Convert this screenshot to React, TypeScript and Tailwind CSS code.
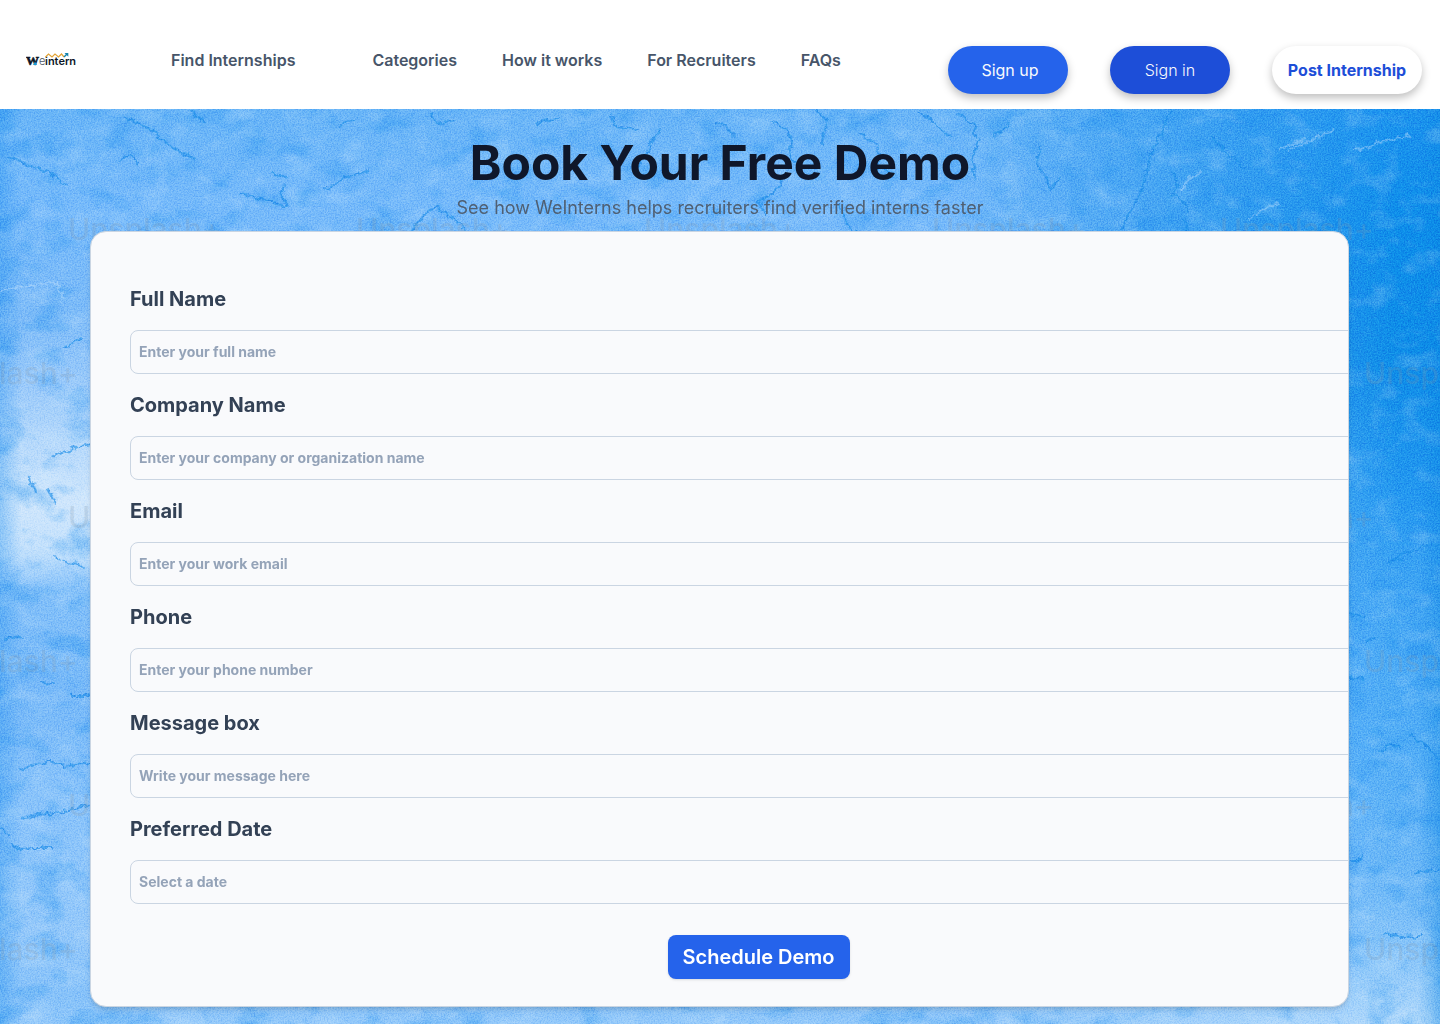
import React from "react";

const navLinks = ["Categories", "How it works", "For Recruiters", "FAQs"];

const fields = [
  { id: "full-name", label: "Full Name", placeholder: "Enter your full name", type: "text" },
  { id: "company", label: "Company Name", placeholder: "Enter your company or organization name", type: "text" },
  { id: "email", label: "Email", placeholder: "Enter your work email", type: "email" },
  { id: "phone", label: "Phone", placeholder: "Enter your phone number", type: "tel" },
  { id: "message", label: "Message box", placeholder: "Write your message here", type: "multiline" },
  { id: "date", label: "Preferred Date", placeholder: "Select a date", type: "text" },
];

const watermarks = [
  [68, 131], [356, 131], [644, 131], [932, 131], [1220, 131],
  [-76, 275], [1364, 275],
  [68, 419], [1220, 419],
  [-76, 563], [1364, 563],
  [68, 707], [1220, 707],
  [-76, 851], [1364, 851],
];

const darkCracks = [
  "M8 48l12 4 30 12 16 12",
  "M124 8l26 12 24 20 20 10",
  "M190 2l14 12",
  "M120 52l10-6 8 8",
  "M240 85l20 4 28 8-8-14 6-8",
  "M270 62l16 8",
  "M340 17l6-5 10-2M368 62l-22 6-20 12",
  "M430 6l10 8 12-2",
  "M412 122l10-14 14-10 16 10 14 14",
  "M536 14l22-5M612 8l4 10 22 2M660 20l-14 24-8 14",
  "M715 14l10 2 8 10",
  "M772 12l14 8 6 12-2 16 8 10",
  "M818 2l10 10-4 12-2 10",
  "M860 24l12 8 8 12-2 14 14 8",
  "M920 2l14 12 16 14",
  "M786 66l-12 18-16 8 8 14M838 95l6 12 8 18 6-4",
  "M958 4l18 14-2 10M978 30l-6 22 4 20",
  "M1008 14l-6 10-8 2",
  "M1040 38l-3 18 8 12 6 14 8-14",
  "M1170 2l-8 20-10 20-8 30-8 22-8 12-6 14",
  "M1174 64l4 14-6 8 12 6 6 10M1184 110l4 14",
  "M1212 28l12 14 20 16",
  "M1334 70l-3 24 4 18 6 10",
  "M1364 278l20-4 30-6 26-4M1388 451l18-7 22-8 12-1M1388 452l14-2",
  "M1350 505l16 3M1366 533l12-5M1350 568l14 1",
  "M1380 642l12-6 8 2M1412 626l12 10 16 14",
  "M1350 752l8 0 5-6M1416 763l24-1M1384 824l16 4 20-1",
  "M54 346l24-8 12-3M30 370l6 12M48 380l8 14",
  "M54 446l14 8 16 3",
  "M4 530l18-2M70 587l14 0 6-2M42 574l12 1",
  "M20 660l30-8 14 6 26-4M24 708l30-4 36-8",
  "M0 720l10 6M12 736l8 4 14-1 18 0",
  "M142 202l-4 12M62 239l20-10",
];

const lightCracks = [
  "M1181 82l8-12 14-8",
  "M1250 109l12-8 16-6",
  "M1354 42l30-10 26-6",
  "M1290 40l20-8 24-12",
  "M0 182l30-5 28-4M54 172l10 18",
  "M1280 40l26-10",
];

function PaintBackdrop() {
  return (
    <svg
      aria-hidden="true"
      className="absolute inset-0 h-full w-full"
      viewBox="0 0 1440 915"
      preserveAspectRatio="xMidYMid slice"
    >
      <defs>
        <linearGradient id="leftTone" x1="0" y1="0" x2="0" y2="1">
          <stop offset="0" stopColor="#68b5f7" />
          <stop offset="0.1" stopColor="#75bafa" />
          <stop offset="0.22" stopColor="#7bbbf8" />
          <stop offset="0.3" stopColor="#9acafa" />
          <stop offset="0.36" stopColor="#b4d8fb" />
          <stop offset="0.43" stopColor="#cfe6fc" />
          <stop offset="0.48" stopColor="#c4e1fc" />
          <stop offset="0.53" stopColor="#82c0f9" />
          <stop offset="0.64" stopColor="#76b9f8" />
          <stop offset="0.75" stopColor="#88c3fa" />
          <stop offset="0.9" stopColor="#95c9fa" />
          <stop offset="0.97" stopColor="#86c2f9" />
          <stop offset="1" stopColor="#93c9fa" />
        </linearGradient>
        <linearGradient id="rightTone" x1="0" y1="0" x2="0" y2="1">
          <stop offset="0" stopColor="#1b94ee" />
          <stop offset="0.12" stopColor="#0d8eea" />
          <stop offset="0.28" stopColor="#0d8de8" />
          <stop offset="0.42" stopColor="#2399f0" />
          <stop offset="0.55" stopColor="#45a8f4" />
          <stop offset="0.7" stopColor="#52aef6" />
          <stop offset="0.84" stopColor="#6cb8f7" />
          <stop offset="0.93" stopColor="#8cc7f9" />
          <stop offset="1" stopColor="#b0d8fb" />
        </linearGradient>
        <linearGradient id="rightFade">
          <stop offset="0.66" stopColor="#fff" stopOpacity="0" />
          <stop offset="0.8" stopColor="#fff" stopOpacity="0.45" />
          <stop offset="0.97" stopColor="#fff" stopOpacity="1" />
        </linearGradient>
        <linearGradient id="edges">
          <stop offset="0" stopColor="#1c8fee" stopOpacity="0.35" />
          <stop offset="0.015" stopColor="#1c8fee" stopOpacity="0" />
          <stop offset="0.985" stopColor="#0a86e2" stopOpacity="0" />
          <stop offset="1" stopColor="#0a86e2" stopOpacity="0.4" />
        </linearGradient>
        <mask id="rightMask">
          <rect width="1440" height="915" fill="url(#rightFade)" />
        </mask>
        <filter id="grain" x="0" y="0" width="100%" height="100%" colorInterpolationFilters="sRGB">
          <feTurbulence type="fractalNoise" baseFrequency="0.7" numOctaves="2" seed="4" />
          <feColorMatrix values="2 0 0 0 -0.5  2 0 0 0 -0.5  2 0 0 0 -0.5  0 0 0 0 1" />
        </filter>
        <filter id="blotchDark" x="0" y="0" width="100%" height="100%" colorInterpolationFilters="sRGB">
          <feTurbulence type="fractalNoise" baseFrequency="0.03 0.04" numOctaves="6" seed="11" />
          <feColorMatrix values="0 0 0 0 0.1  0 0 0 0 0.56  0 0 0 0 0.93  3 0 0 0 -1.5" />
        </filter>
        <filter id="blotchLight" x="0" y="0" width="100%" height="100%" colorInterpolationFilters="sRGB">
          <feTurbulence type="fractalNoise" baseFrequency="0.035 0.05" numOctaves="6" seed="23" />
          <feColorMatrix values="0 0 0 0 0.88  0 0 0 0 0.95  0 0 0 0 1  2.5 0 0 0 -1.25" />
        </filter>
        <filter id="rough" x="-5%" y="-5%" width="110%" height="110%">
          <feTurbulence type="fractalNoise" baseFrequency="0.15" numOctaves="3" seed="7" />
          <feDisplacementMap in="SourceGraphic" scale="8" xChannelSelector="R" yChannelSelector="G" />
          <feGaussianBlur stdDeviation="0.7" />
        </filter>
      </defs>
      <rect width="1440" height="915" fill="url(#leftTone)" />
      <rect width="1440" height="915" fill="url(#rightTone)" mask="url(#rightMask)" />
      <rect width="1440" height="915" fill="url(#edges)" />
      <rect width="1440" height="915" filter="url(#blotchDark)" opacity="0.35" />
      <rect width="1440" height="915" filter="url(#blotchLight)" opacity="0.22" />
      <g filter="url(#rough)" fill="none" strokeLinecap="round" strokeLinejoin="round">
        <g stroke="#148be8" strokeWidth="2" opacity="0.6">
          {darkCracks.map((d) => (
            <path key={d} d={d} />
          ))}
        </g>
        <g stroke="#c4e2fc" strokeWidth="2" opacity="0.4">
          {lightCracks.map((d) => (
            <path key={d} d={d} />
          ))}
        </g>
      </g>
      <rect width="1440" height="915" filter="url(#grain)" opacity="0.35" className="mix-blend-soft-light" />
      <g fill="#8499ad" opacity="0.22" fontFamily="Inter, sans-serif" fontSize="30" fontWeight="500">
        {watermarks.map(([x, y]) => (
          <text key={`${x}-${y}`} x={x} y={y}>
            Unsplash+
          </text>
        ))}
      </g>
    </svg>
  );
}

function Logo() {
  return (
    <svg aria-label="Weintern" role="img" className="h-4 w-[50px]" viewBox="0 0 50 16">
      <text x="0" y="13" fill="#0b1526" fontFamily="Liberation Serif, serif" fontSize="13" fontWeight="700" stroke="#0b1526" strokeWidth="0.6">
        W
      </text>
      <path d="M7 13l2-3.500 2 3.500z" fill="#1d9ad0" />
      <text x="13" y="13" fill="#4b5563" fontFamily="Inter, sans-serif" fontSize="11" fontWeight="300">
        e
      </text>
      <text x="19" y="13" fill="#0b1526" fontFamily="Inter, sans-serif" fontSize="11" fontWeight="600">
        intern
      </text>
      <path d="M19.500 5l3-3 3.500 3 3-3 3.500 3 3-3 2.500 3" fill="none" stroke="#e2a336" strokeWidth="1.200" />
      <path d="M38 5l3-3" stroke="#1583ad" strokeWidth="1.400" />
      <path d="M38.500 1h3.800v3.800z" fill="#1583ad" />
    </svg>
  );
}

export default function App() {
  return (
    <div className="flex min-h-screen flex-col bg-white font-['Inter',sans-serif]">
      <header className="flex items-start pt-[46px] pr-[18px] pb-[15px] pl-[26px]">
        <a href="#" className="mt-1.5 shrink-0">
          <Logo />
        </a>
        <nav className="ml-[95px] flex items-center gap-[45px] pt-0.5 text-base font-semibold whitespace-nowrap text-[#475569]">
          <a href="#" className="mr-8">Find Internships</a>
          {navLinks.map((link) => (
            <a key={link} href="#">{link}</a>
          ))}
        </nav>
        <div className="ml-auto flex gap-[42px] text-base whitespace-nowrap">
          <button className="h-12 w-[120px] rounded-3xl bg-[#2563eb] pl-1 text-slate-50 shadow-[0_4px_8px_rgba(0,0,0,0.25)]">
            Sign up
          </button>
          <button className="h-12 w-[120px] rounded-3xl bg-[#1d4ed8] font-light text-slate-50 shadow-[0_4px_8px_rgba(0,0,0,0.25)]">
            Sign in
          </button>
          <button className="h-12 w-[150px] rounded-3xl bg-white font-bold text-[#1d4ed8] shadow-[0_4px_8px_rgba(0,0,0,0.25)]">
            Post Internship
          </button>
        </div>
      </header>

      <main className="relative isolate flex-1 overflow-hidden pb-[17px]">
        <PaintBackdrop />
        <div className="relative">
          <div className="pt-6 text-center">
            <h1 className="text-[48px] leading-[60px] font-bold text-[#0f172a]">Book Your Free Demo</h1>
            <p className="text-lg leading-[30px] font-normal text-[#4b5563]/90">
              See how WeInterns helps recruiters find verified interns faster
            </p>
          </div>
          <section className="mt-2 mr-[91px] ml-[90px] overflow-hidden rounded-2xl border border-slate-300 bg-[#f9fafc] shadow-md">
            <form className="ml-[39px] flex w-full flex-col gap-[18px] pt-[54px] pb-[27px]">
              {fields.map((field) => (
                <div key={field.id} className="flex flex-col gap-[17px]">
                  <label htmlFor={field.id} className="text-xl leading-[27px] font-bold text-[#334155]">
                    {field.label}
                  </label>
                  {field.type === "multiline" ? (
                    <textarea
                      id={field.id}
                      rows={1}
                      placeholder={field.placeholder}
                      className="h-11 w-full resize-none rounded-lg border border-slate-300 bg-transparent px-2 py-[11px] text-sm font-bold text-[#334155] placeholder:text-[#94a3b8]"
                    />
                  ) : (
                    <input
                      id={field.id}
                      type={field.type}
                      placeholder={field.placeholder}
                      className="h-11 w-full rounded-lg border border-slate-300 bg-transparent px-2 pb-0.5 text-sm font-bold text-[#334155] placeholder:text-[#94a3b8]"
                    />
                  )}
                </div>
              ))}
              <button
                type="submit"
                className="mt-[13px] h-11 w-[182px] self-center rounded-lg bg-[#2563eb] text-xl font-semibold text-white shadow-sm"
              >
                Schedule Demo
              </button>
            </form>
          </section>
        </div>
      </main>
    </div>
  );
}
